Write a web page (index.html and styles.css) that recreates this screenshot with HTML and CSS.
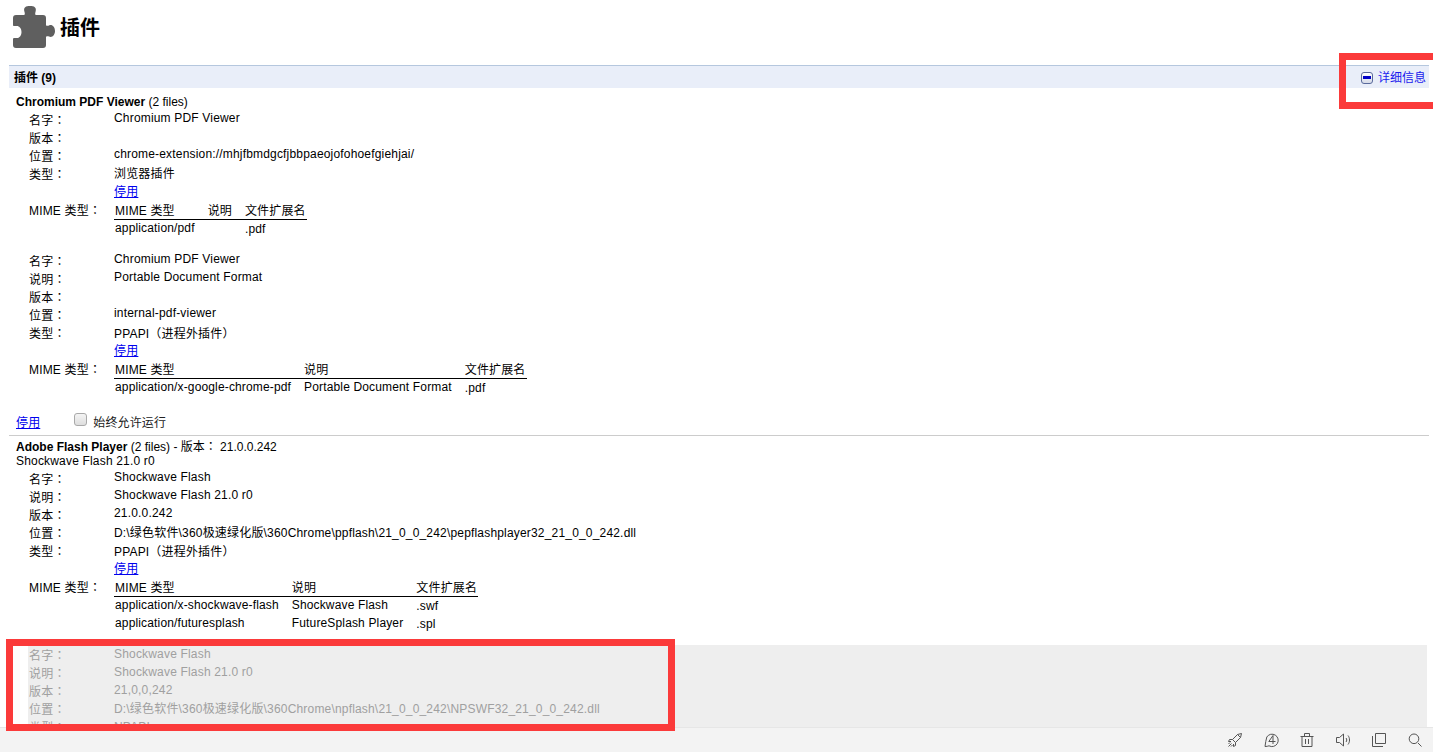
FILE: index.html
```html
<!DOCTYPE html>
<html lang="zh-CN">
<head>
<meta charset="utf-8">
<title>插件</title>
<link rel="stylesheet" href="styles.css">
</head>
<body>
<div class="app">
<main class="main">
  <header class="page-head">
    <svg class="puzzle" viewBox="0 0 42 42" width="42" height="42"><path fill="#5f5f5f" d="M3 9H11C12 9 12 7 11.500 6C10 1 13 0 17 0C21 0 24 1 22.500 6C22 7 22 9 23 9H30a3 3 0 0 1 3 3V19C33 20 35 20 36 19.500C39 18 42 21 42 25C42 29 39 32 36 30.500C35 30 33 30 33 31V39a3 3 0 0 1-3 3H3a3 3 0 0 1-3-3V33C0 31.500 2 32 3 32C6 32.500 8.500 30 8.500 26C8.500 22 6 19.500 3 20C2 20 0 20.500 0 19V12a3 3 0 0 1 3-3Z"/></svg>
    <h1 class="page-title">插件</h1>
  </header>
  <div class="section-head">
    <b>插件 (9)</b>
    <a class="details" href="#"><span class="minus"></span>详细信息</a>
  </div>

  <section class="plugin">
    <div class="plugin-title"><b>Chromium PDF Viewer</b> (2 files)</div>
    <div class="file">
      <div class="row"><span>名字<span class="p" lang="zh-TW">：</span></span><span class="lat">Chromium PDF Viewer</span></div>
      <div class="row"><span>版本<span class="p" lang="zh-TW">：</span></span><span class="lat"></span></div>
      <div class="row"><span>位置<span class="p" lang="zh-TW">：</span></span><span class="lat">chrome-extension://mhjfbmdgcfjbbpaeojofohoefgiehjai/</span></div>
      <div class="row"><span>类型<span class="p" lang="zh-TW">：</span></span><span>浏览器插件</span></div>
      <div class="row"><span></span><a href="#">停用</a></div>
      <div class="row mime"><span>MIME 类型<span class="p" lang="zh-TW">：</span></span>
        <table><tr><th>MIME 类型</th><th>说明</th><th>文件扩展名</th></tr>
        <tr><td>application/pdf</td><td></td><td class="ext">.pdf</td></tr></table>
      </div>
    </div>
    <div class="file">
      <div class="row"><span>名字<span class="p" lang="zh-TW">：</span></span><span class="lat">Chromium PDF Viewer</span></div>
      <div class="row"><span>说明<span class="p" lang="zh-TW">：</span></span><span class="lat">Portable Document Format</span></div>
      <div class="row"><span>版本<span class="p" lang="zh-TW">：</span></span><span class="lat"></span></div>
      <div class="row"><span>位置<span class="p" lang="zh-TW">：</span></span><span class="lat">internal-pdf-viewer</span></div>
      <div class="row"><span>类型<span class="p" lang="zh-TW">：</span></span><span>PPAPI<span class="p" lang="zh-TW">（</span>进程外插件<span class="p" lang="zh-TW">）</span></span></div>
      <div class="row"><span></span><a href="#">停用</a></div>
      <div class="row mime"><span>MIME 类型<span class="p" lang="zh-TW">：</span></span>
        <table><tr><th>MIME 类型</th><th>说明</th><th>文件扩展名</th></tr>
        <tr><td>application/x-google-chrome-pdf</td><td>Portable Document Format</td><td class="ext">.pdf</td></tr></table>
      </div>
    </div>
    <div class="plugin-actions">
      <a href="#">停用</a>
      <label class="always"><input type="checkbox">始终允许运行</label>
    </div>
  </section>

  <section class="plugin second">
    <div class="plugin-title first"><b>Adobe Flash Player</b> (2 files) - 版本<span class="p" lang="zh-TW">：</span> 21.0.0.242</div>
    <div class="plugin-title tight spaced">Shockwave Flash 21.0 r0</div>
    <div class="file flash">
      <div class="row"><span>名字<span class="p" lang="zh-TW">：</span></span><span class="lat">Shockwave Flash</span></div>
      <div class="row"><span>说明<span class="p" lang="zh-TW">：</span></span><span class="lat">Shockwave Flash 21.0 r0</span></div>
      <div class="row"><span>版本<span class="p" lang="zh-TW">：</span></span><span class="lat">21.0.0.242</span></div>
      <div class="row"><span>位置<span class="p" lang="zh-TW">：</span></span><span>D:\绿色软件\360极速绿化版\360Chrome\ppflash\21_0_0_242\pepflashplayer32_21_0_0_242.dll</span></div>
      <div class="row"><span>类型<span class="p" lang="zh-TW">：</span></span><span>PPAPI<span class="p" lang="zh-TW">（</span>进程外插件<span class="p" lang="zh-TW">）</span></span></div>
      <div class="row"><span></span><a href="#">停用</a></div>
      <div class="row mime"><span>MIME 类型<span class="p" lang="zh-TW">：</span></span>
        <table><tr><th>MIME 类型</th><th>说明</th><th>文件扩展名</th></tr>
        <tr><td>application/x-shockwave-flash</td><td>Shockwave Flash</td><td class="ext">.swf</td></tr>
        <tr><td>application/futuresplash</td><td>FutureSplash Player</td><td class="ext">.spl</td></tr></table>
      </div>
    </div>
    <div class="file disabled">
      <div class="row"><span>名字<span class="p" lang="zh-TW">：</span></span><span class="lat">Shockwave Flash</span></div>
      <div class="row"><span>说明<span class="p" lang="zh-TW">：</span></span><span class="lat">Shockwave Flash 21.0 r0</span></div>
      <div class="row"><span>版本<span class="p" lang="zh-TW">：</span></span><span class="lat">21,0,0,242</span></div>
      <div class="row"><span>位置<span class="p" lang="zh-TW">：</span></span><span>D:\绿色软件\360极速绿化版\360Chrome\npflash\21_0_0_242\NPSWF32_21_0_0_242.dll</span></div>
      <div class="row"><span>类型<span class="p" lang="zh-TW">：</span></span><span>NPAPI</span></div>
    </div>
  </section>
</main>
<footer class="toolbar">
  <svg viewBox="0 0 16 16" width="16" height="16"><path d="M5.500 7.500L10.500 2.500L14.500 1.500L13.500 5.500L8.500 10.500ZM5.500 7.500L2.500 7.500L1.500 9.500L4 9.500M8.500 10.500L8.500 13.500L6.500 14.500L6.500 12M4.500 11.500L1.500 14.500M10.500 2.500L13.500 5.500M3 10.500L1.500 12M5.500 13L4 14.500"/></svg>
  <svg viewBox="0 0 16 16" width="16" height="16"><path d="M3.800 5A6.200 6.200 0 1 1 6 13.800M3.800 5C3 8 2.400 11 2 14.500C3.500 14.500 5 14.200 6 13.800M10 3.500L5.800 9.500H12.500M10 3.500V12"/></svg>
  <svg viewBox="0 0 16 16" width="16" height="16"><path d="M1.500 4.500H14.500M5.500 4.500V1.500H10.500V4.500M3 4.500V14.500H13V4.500M6.500 7V12M9.500 7V12"/></svg>
  <svg viewBox="0 0 16 16" width="16" height="16"><path d="M1.500 5.500H4.500L8.500 2V14L4.500 10.500H1.500ZM11 6C12 7.200 12 8.800 11 10M13 3.500C15 6 15 10 13 12.500"/></svg>
  <svg viewBox="0 0 16 16" width="16" height="16"><path d="M4.500 1.500H14.500V11.500H4.500ZM1.500 4V14.500H12"/></svg>
  <svg viewBox="0 0 16 16" width="16" height="16"><path d="M11 11L14.500 14.500M11.800 6.800A4.800 4.800 0 1 1 2.200 6.800A4.800 4.800 0 1 1 11.800 6.800Z"/></svg>
</footer>
</div>
<div class="mark mark-details"></div>
<div class="mark mark-npapi"></div>
</body>
</html>
```

FILE: styles.css
```css
* { box-sizing: border-box; }
html, body { margin: 0; height: 100%; overflow: hidden; }
body {
  background: #fff;
  color: #000;
  font: 12px/18px "Liberation Sans", "Noto Sans CJK SC", sans-serif;
}
a { color: #0000ee; }
.p { font-family: "Noto Sans CJK TC", sans-serif; }
.app { display: flex; flex-direction: column; height: 100vh; }
.main { flex: 1; min-height: 0; overflow: hidden; padding: 0 4px 0 9px; }
.page-head { display: flex; align-items: center; height: 65px; padding: 0 0 11px 4px; }
.puzzle { display: block; margin-right: 5px; }
.page-title { margin: 0; padding-top: 2px; font-size: 20px; line-height: 42px; font-weight: 700; }
.section-head {
  display: flex;
  justify-content: space-between;
  height: 23px;
  padding: 3px 3px 0 5px;
  border-top: 1px solid #b5c7de;
  background: #e9eef9;
  line-height: 18px;
}
.details { display: flex; align-items: center; height: 18px; color: #1a1aee; text-decoration: none; }
.minus {
  position: relative;
  width: 12px;
  height: 12px;
  margin-right: 5px;
  border: 1px solid #5a6a9c;
  border-radius: 3px;
  background: linear-gradient(#fff, #d6dbe8);
}
.minus::after {
  content: "";
  position: absolute;
  left: 1px;
  right: 1px;
  top: 3px;
  height: 3px;
  background: #0000c8;
}
.plugin { padding: 6px 0 0 7px; }
.plugin.second { padding-top: 3px; }
.plugin-title { height: 15px; line-height: 16px; }
.plugin-title.first { height: 15px; line-height: 14px; }
.plugin-title.tight { height: 14px; line-height: 14px; }
.plugin-title.spaced { letter-spacing: 0.18px; }
.file { margin-bottom: 12px; }
.file.flash { margin-bottom: 12px; }
.row {
  display: grid;
  grid-template-columns: 85px 1fr;
  height: 18px;
  padding-left: 13px;
  line-height: 18px;
  letter-spacing: 0.18px;
}
.row > span, .row > a { padding-top: 2px; }
.row > .lat { padding-top: 0; }
.row > a { justify-self: start; }
.row.mime { height: auto; }
table {
  border-collapse: collapse;
  border-spacing: 0;
  margin-top: 2px;
  justify-self: start;
  letter-spacing: 0.15px;
}
th {
  padding: 2px 12px 0 1px;
  border-bottom: 1px solid #000;
  font-weight: 400;
  text-align: left;
  line-height: 16px;
  height: 18px;
}
td {
  padding: 0 12px 0 1px;
  height: 18px;
  line-height: 16px;
  vertical-align: top;
}
th:last-child, td:last-child { padding-right: 1px; }
td.ext { padding-top: 1px; }
.plugin-actions {
  display: flex;
  align-items: flex-start;
  gap: 34px;
  height: 28px;
  margin-left: -7px;
  padding: 6px 0 0 7px;
  border-bottom: 1px solid #ccc;
  letter-spacing: 0.125px;
}
.always { display: flex; align-items: flex-start; color: #222; }
.always input {
  appearance: none;
  width: 13px;
  height: 13px;
  margin: -1px 6px 0 0;
  border: 1px solid #a9a9a9;
  border-radius: 3px;
  background: linear-gradient(#f4f4f4, #dedede);
}
.file.disabled {
  margin: 0 2px 0 12px;
  background: #eee;
  color: #a0a0a0;
}
.file.disabled .row { padding-left: 1px; }
.file.disabled .row > span { padding-top: 1px; }
.file.disabled .row > .lat { padding-top: 0; }
.toolbar {
  display: flex;
  flex: none;
  justify-content: flex-end;
  align-items: center;
  gap: 20px;
  height: 25px;
  padding-right: 10px;
  border-top: 1px solid #e6e6e6;
  background: #f3f3f3;
}
.toolbar svg { fill: none; stroke: #555; stroke-width: 1; display: block; }
.mark { position: absolute; border: 7px solid #fb3a3a; }
.mark-details { left: 1339px; top: 53px; width: 94px; height: 56px; border-right-width: 0; }
.mark-npapi { left: 6px; top: 639px; width: 669px; height: 92px; }
```
